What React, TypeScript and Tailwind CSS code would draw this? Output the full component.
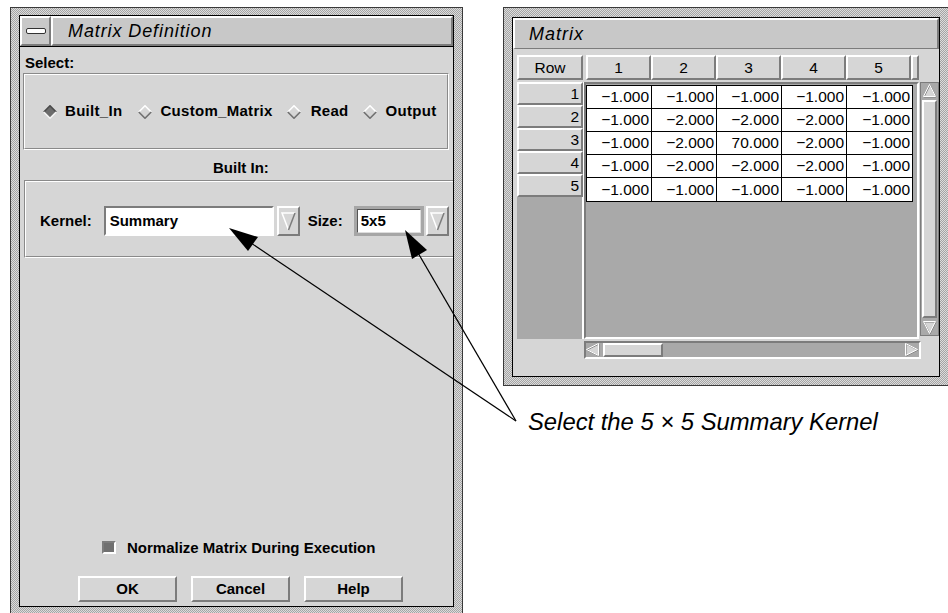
import React from "react"

const SANS = "font-['Liberation_Sans',Arial,sans-serif]"
const DITHER =
  "bg-[image:repeating-conic-gradient(#a4a4a4_0%_25%,#dcdcdc_0%_50%)] bg-size-[2px_2px]"
const RAISED = "border-2 border-t-white border-l-white border-r-[#7c7c7c] border-b-[#7c7c7c]"
const SUNKEN = "border-2 border-t-[#7c7c7c] border-l-[#7c7c7c] border-r-white border-b-white"

function Diamond({ on }: { on?: boolean }) {
  return (
    <svg width="14" height="14" viewBox="0 0 14 14" className="shrink-0">
      <polygon points="7,0.8 13.2,7 7,13.2 0.8,7" fill={on ? "#6c6c6c" : "#d6d6d6"} />
      <polyline points="0.8,7 7,0.8 13.2,7" fill="none" stroke={on ? "#4a4a4a" : "#ffffff"} strokeWidth="1.6" />
      <polyline points="0.8,7 7,13.2 13.2,7" fill="none" stroke={on ? "#f4f4f4" : "#707070"} strokeWidth="1.6" />
    </svg>
  )
}

function DropButton() {
  return (
    <div className={`w-[23px] h-[30px] shrink-0 bg-[#d6d6d6] ${RAISED} flex items-center justify-center`}>
      <svg width="15" height="20" viewBox="0 0 15 20">
        <polygon points="1,2 14,2 7.5,19" fill="#d6d6d6" />
        <polyline points="7.5,19 1,2 14,2" fill="none" stroke="#ffffff" strokeWidth="1.5" />
        <line x1="14" y1="2" x2="7.5" y2="19" stroke="#7c7c7c" strokeWidth="1.5" />
      </svg>
    </div>
  )
}

function Etched({ className, children }: { className: string; children: React.ReactNode }) {
  return (
    <div className={`border border-t-[#8a8a8a] border-l-[#8a8a8a] border-r-white border-b-white ${className}`}>
      <div className="w-full h-full border border-t-white border-l-white border-r-[#8a8a8a] border-b-[#8a8a8a]">
        {children}
      </div>
    </div>
  )
}

function PushButton({ label }: { label: string }) {
  return (
    <div className={`w-[99px] h-[26px] bg-[#d6d6d6] ${RAISED} flex items-center justify-center text-[15px] font-bold`}>
      {label}
    </div>
  )
}

function MatrixDefinition() {
  return (
    <div className={`w-[453px] h-[608px] shrink-0 border border-[#3a3a3a] ${DITHER} px-[8px] pt-[7px] pb-[7px] flex flex-col`}>
      <div className="flex-1 border border-black flex flex-col bg-[#d6d6d6] overflow-hidden">
        <div className="h-[31px] flex border-b border-black bg-[#c8c8c8] shrink-0">
          <div className={`w-[31px] h-full ${RAISED} flex items-center justify-center`}>
            <div className="w-[20px] h-[6px] rounded-[2px] border border-[#333] bg-white" />
          </div>
          <div className={`flex-1 h-full ${RAISED} pl-[15px] flex items-center text-[18px] italic tracking-[0.9px] text-black`}>
            Matrix Definition
          </div>
        </div>

        <div className="flex-1 flex flex-col text-[15px] font-bold text-black">
          <div className="pl-[5px] pt-[7px] leading-[17px]">Select:</div>
          <Etched className="ml-[3px] mt-[2px] w-[426px] h-[77px]">
            <div className="h-full flex items-center pl-[18px] tracking-[0.3px]">
              <Diamond on />
              <span className="ml-[8px]">Built_In</span>
              <span className="ml-[16px]"><Diamond /></span>
              <span className="ml-[8px]">Custom_Matrix</span>
              <span className="ml-[14px]"><Diamond /></span>
              <span className="ml-[10px]">Read</span>
              <span className="ml-[14px]"><Diamond /></span>
              <span className="ml-[9px]">Output</span>
            </div>
          </Etched>
          <div className="pl-[193px] mt-[9px] leading-[17px]">Built In:</div>
          <Etched className="ml-[4px] mt-[4px] w-[440px] h-[78px]">
            <div className="h-full flex items-center pl-[14px] pt-[4px]">
              <span>Kernel:</span>
              <div className={`ml-[12px] w-[170px] h-[30px] bg-white ${SUNKEN} flex items-center pl-[4px]`}>Summary</div>
              <div className="ml-[3px]"><DropButton /></div>
              <span className="ml-[8px]">Size:</span>
              <div className="ml-[11px] w-[70px] h-[30px] border-[3px] border-[#a6a6a6] flex">
                <div className="flex-1 bg-white border border-t-[#555] border-l-[#555] border-r-[#ddd] border-b-[#ddd] flex items-center pl-[3px]">5x5</div>
              </div>
              <div className="ml-[2px]"><DropButton /></div>
            </div>
          </Etched>

          <div className="flex-1" />
          <div className="flex items-center pl-[82px]">
            <div className={`w-[14px] h-[13px] bg-[#707070] ${SUNKEN}`} />
            <span className="ml-[11px]">Normalize Matrix During Execution</span>
          </div>
          <div className="flex gap-[14px] pl-[58px] mt-[17px] mb-[4px]">
            <PushButton label="OK" />
            <PushButton label="Cancel" />
            <PushButton label="Help" />
          </div>
        </div>
      </div>
    </div>
  )
}

const ROWS = [
  ["−1.000", "−1.000", "−1.000", "−1.000", "−1.000"],
  ["−1.000", "−2.000", "−2.000", "−2.000", "−1.000"],
  ["−1.000", "−2.000", "70.000", "−2.000", "−1.000"],
  ["−1.000", "−2.000", "−2.000", "−2.000", "−1.000"],
  ["−1.000", "−1.000", "−1.000", "−1.000", "−1.000"],
]

function ArrowTri({ dir }: { dir: "up" | "down" | "left" | "right" }) {
  const pts = {
    up: "7,1 13,13 1,13",
    down: "1,1 13,1 7,13",
    left: "1,7 13,1 13,13",
    right: "13,7 1,1 1,13",
  }[dir]
  return (
    <svg width="14" height="14" viewBox="0 0 14 14">
      <polygon points={pts} fill="#d6d6d6" stroke="#7c7c7c" strokeWidth="1" />
      <polygon points={pts} fill="none" stroke="#ffffff" strokeWidth="1" transform="translate(-0.5,-0.5)" />
    </svg>
  )
}

function MatrixWindow() {
  return (
    <div className={`w-[446px] h-[379px] shrink-0 border border-[#3a3a3a] ${DITHER} px-[8px] pt-[9px] pb-[8px] flex flex-col`}>
      <div className="flex-1 border border-black flex flex-col bg-[#d6d6d6] overflow-hidden">
        <div className={`h-[31px] shrink-0 border-b border-black bg-[#c8c8c8] ${RAISED} pl-[14px] flex items-center text-[18px] italic tracking-[1px] text-black`}>
          Matrix
        </div>
        <div className="flex-1 flex flex-col pl-[4px] pt-[6px] text-[15.5px] text-black">
          <div className="flex h-[25px]">
            <div className={`w-[66px] bg-[#d6d6d6] ${RAISED} flex items-center justify-center`}>Row</div>
            <div className="w-[3px]" />
            {[1, 2, 3, 4, 5].map((n) => (
              <div key={n} className={`w-[65px] bg-[#d6d6d6] ${RAISED} flex items-center justify-center`}>
                {n}
              </div>
            ))}
            <div className={`w-[8px] bg-[#d6d6d6] ${RAISED}`} />
          </div>
          <div className="flex mt-[2px]">
            <div className="w-[67px] h-[257px] bg-[#a9a9a9] border-r-2 border-white flex flex-col">
              {ROWS.map((_, i) => (
                <div key={i} className={`h-[23px] w-[66px] bg-[#d6d6d6] ${RAISED} flex items-center justify-end pr-[2px]`}>
                  {i + 1}
                </div>
              ))}
            </div>
            <div className="w-[2px]" />
            <div className="flex flex-col">
              <div className="flex">
                <div className={`w-[335px] h-[257px] bg-[#a9a9a9] ${SUNKEN} pt-[1px]`}>
                  <div className="w-[327px] border border-black bg-white flex flex-col">
                    {ROWS.map((r, i) => (
                      <div key={i} className={`flex h-[23px] ${i < 4 ? "border-b border-black" : ""}`}>
                        {r.map((v, j) => (
                          <div
                            key={j}
                            className={`${j < 4 ? "w-[65px] border-r border-black" : "flex-1"} flex items-center justify-end pr-[2px] leading-none`}
                          >
                            {v}
                          </div>
                        ))}
                      </div>
                    ))}
                  </div>
                </div>
                <div className="ml-[1px] w-[19px] h-[254px] bg-[#a9a9a9] flex flex-col border border-[#7c7c7c]">
                  <div className="h-[15px] flex items-center justify-center"><ArrowTri dir="up" /></div>
                  <div className={`flex-1 mx-[1px] my-[2px] bg-[#d6d6d6] ${RAISED}`} />
                  <div className="h-[15px] flex items-center justify-center"><ArrowTri dir="down" /></div>
                </div>
              </div>
              <div className={`mt-[2px] w-[337px] h-[18px] bg-[#a9a9a9] ${SUNKEN} flex items-center`}>
                <ArrowTri dir="left" />
                <div className={`ml-[3px] w-[60px] h-[14px] bg-[#d6d6d6] ${RAISED}`} />
                <div className="flex-1" />
                <ArrowTri dir="right" />
              </div>
            </div>
          </div>
        </div>
      </div>
    </div>
  )
}

export default function App() {
  return (
    <div className={`relative w-[948px] h-[613px] bg-white overflow-hidden ${SANS}`}>
      <div className="flex items-start pl-[10px] pt-[7px]">
        <MatrixDefinition />
        <div className="ml-[40px] flex flex-col">
          <MatrixWindow />
          <div className="pl-[25px] mt-[22px] text-[23.8px] italic leading-[28px] text-black">
            Select the 5 × 5 Summary Kernel
          </div>
        </div>
      </div>
      <svg className="absolute inset-0 pointer-events-none" width="948" height="613">
        <line x1="516" y1="421" x2="245" y2="239" stroke="black" strokeWidth="1.2" />
        <line x1="516" y1="421" x2="414" y2="246" stroke="black" strokeWidth="1.2" />
        <polygon points="229,228 258,237 248,251" fill="black" />
        <polygon points="405,230 427,250 412,259" fill="black" />
      </svg>
    </div>
  )
}
